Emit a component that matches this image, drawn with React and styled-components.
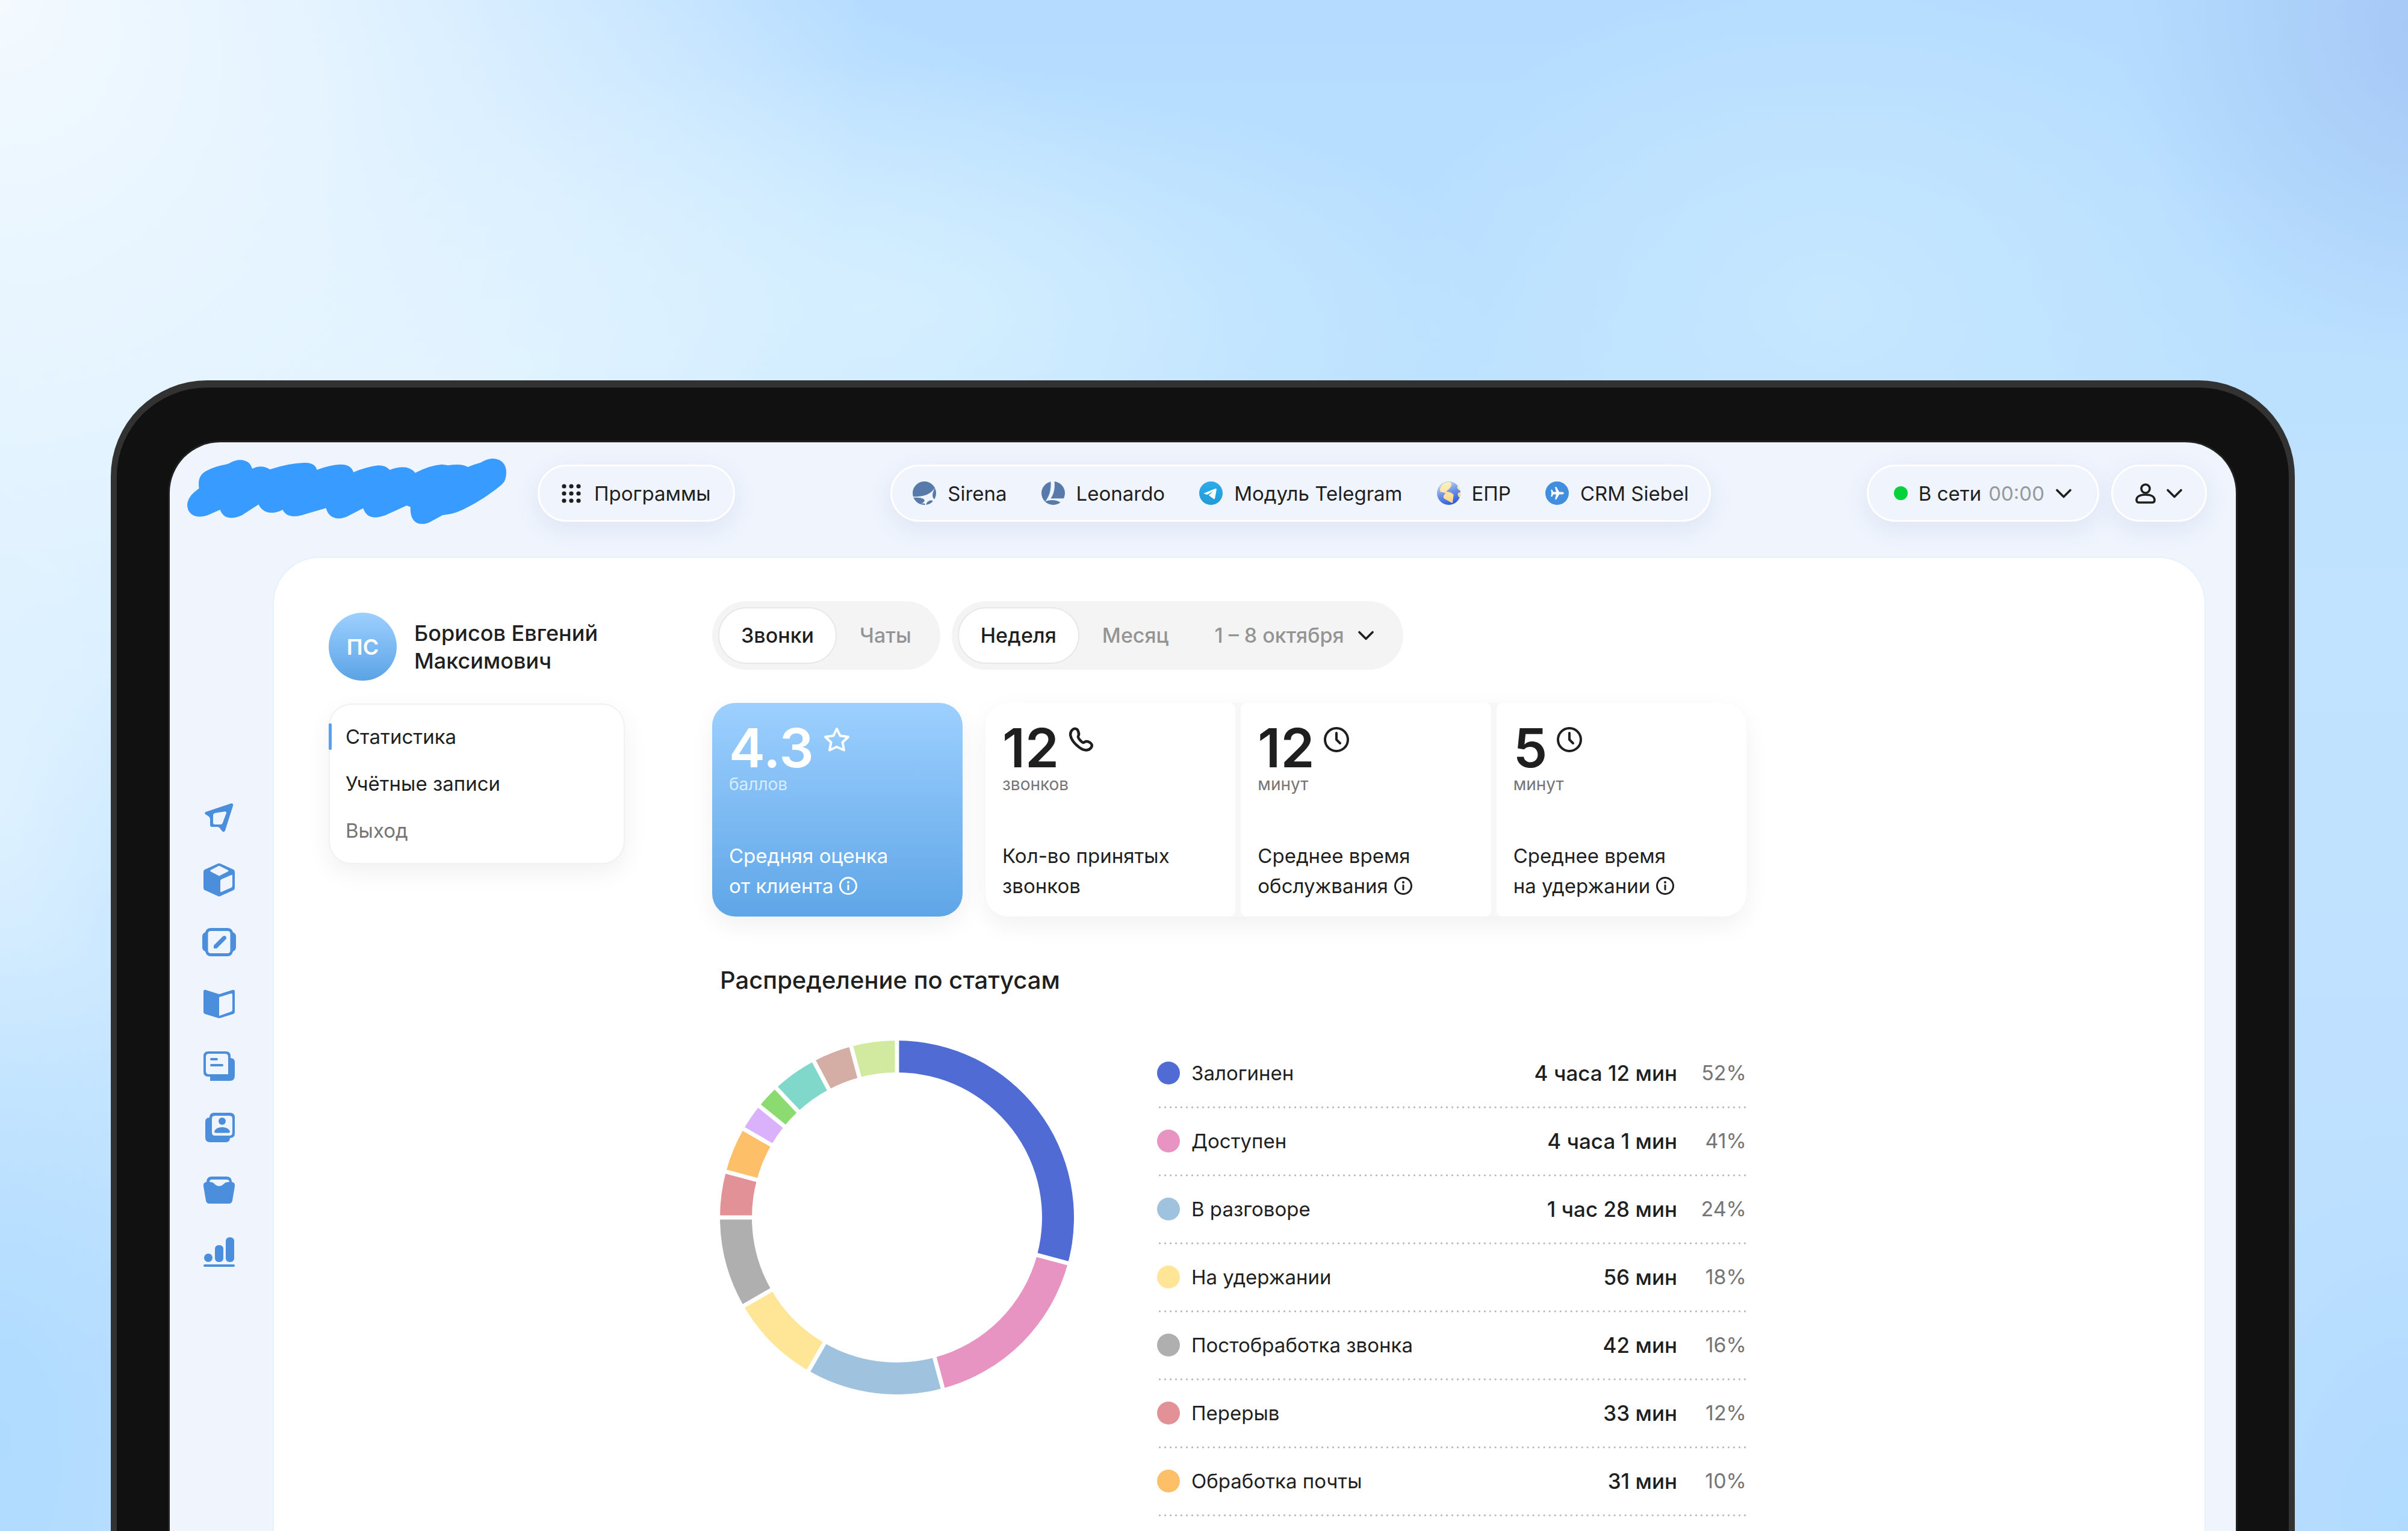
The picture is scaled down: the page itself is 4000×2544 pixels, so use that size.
import React from "react";
import styled, { createGlobalStyle } from "styled-components";

const GlobalStyle = createGlobalStyle`
  * {
    box-sizing: border-box;
  }

  body {
    margin: 0;
    background: #bfe2ff;
    color: #1f1f1f;
    font-family: Inter, "Liberation Sans", sans-serif;
    font-size: 33px;
    line-height: 50px;
  }

  button {
    font: inherit;
    color: inherit;
    background: none;
    border: 0;
    padding: 0;
    cursor: pointer;
  }

  a {
    color: inherit;
    text-decoration: none;
  }
`;

const Page = styled.div`
  display: flex;
  height: 100vh;
  overflow: hidden;
  padding: 632px 188px 0 184px;
  background:
    radial-gradient(ellipse 36% 60% at 0% 0%, #f4faff 0%, rgba(236, 247, 255, 0.8) 40%, rgba(224, 242, 255, 0) 100%),
    radial-gradient(ellipse 13% 22% at 101% 2%, #a5c8f5 0%, rgba(174, 212, 251, 0) 100%),
    radial-gradient(ellipse 34% 30% at 18% 26%, #dcf1ff 0%, rgba(220, 241, 255, 0) 100%),
    radial-gradient(ellipse 18% 22% at 76% 20%, #c6e7ff 0%, rgba(198, 231, 255, 0) 100%),
    radial-gradient(ellipse 26% 16% at 36% 20%, #d0edff 0%, rgba(208, 237, 255, 0) 100%),
    radial-gradient(ellipse 10% 34% at 0% 94%, #afdbff 0%, rgba(175, 219, 255, 0) 100%),
    radial-gradient(ellipse 10% 26% at 100% 100%, #b0daff 0%, rgba(176, 218, 255, 0) 100%),
    radial-gradient(ellipse 10% 40% at 0% 52%, #dbf0ff 0%, rgba(219, 240, 255, 0) 100%),
    linear-gradient(180deg, #b5dcff 0%, #bae0ff 20%, #c1e3ff 40%, #bcdfff 100%);
`;

const Laptop = styled.div`
  flex: 1;
  display: flex;
  min-width: 0;
  padding: 91px 88px 0;
  background: #111111;
  border: 10px solid #323232;
  border-top-width: 12px;
  border-bottom: 0;
  border-radius: 160px 160px 0 0;
`;

const Screen = styled.div`
  flex: 1;
  display: flex;
  flex-direction: column;
  min-width: 0;
  background: #eff4fd;
  border-radius: 84px 84px 0 0;
  box-shadow: 0 0 0 3px #1f2020;
`;

const Header = styled.header`
  display: flex;
  justify-content: space-between;
  align-items: center;
  padding: 27px 48px 0 29px;
`;

const HeaderGroup = styled.div`
  display: flex;
  align-items: center;
  gap: ${({ $gap }) => $gap}px;
`;

const Pill = styled.div`
  display: flex;
  align-items: center;
  gap: ${({ $gap }) => $gap}px;
  height: 95px;
  padding: 0 ${({ $pad }) => $pad}px;
  background: #eff4fd;
  border: 3px solid #ffffff;
  border-radius: 48px;
  box-shadow: 0 12px 40px rgba(78, 104, 170, 0.1);
  white-space: nowrap;
`;

const PillButton = styled(Pill).attrs({ as: "button", type: "button" })`
  background: #eff4fd;
  border: 3px solid #ffffff;
  padding: 0 ${({ $pad }) => $pad}px;
`;

const ProgramLink = styled.a`
  display: flex;
  align-items: center;
  gap: 19px;
`;

const OnlineDot = styled.span`
  width: 23px;
  height: 23px;
  border-radius: 50%;
  background: #04d23c;
`;

const Timer = styled.span`
  color: #96999e;
  margin-left: 12px;
`;

const Body = styled.div`
  flex: 1;
  display: flex;
  margin-top: 48px;
  padding-right: 50px;
`;

const Sidebar = styled.nav`
  flex: none;
  display: flex;
  flex-direction: column;
  align-items: center;
  gap: 47px;
  width: 171px;
  padding: 406px 7px 0 0;
  color: #4b8edb;
`;

const SidebarLink = styled.a`
  display: flex;
`;

const Panel = styled.div`
  flex: 1;
  display: flex;
  align-items: flex-start;
  gap: 145px;
  min-width: 0;
  padding: 72px 91px 0;
  background: #ffffff;
  border: 2px solid #e6f1fe;
  border-bottom: 0;
  border-radius: 78px 78px 0 0;
`;

const Aside = styled.aside`
  flex: none;
  width: 492px;
  padding-top: 19px;
`;

const Profile = styled.div`
  display: flex;
  align-items: center;
  gap: 29px;
`;

const Avatar = styled.div`
  flex: none;
  display: flex;
  align-items: center;
  justify-content: center;
  width: 113px;
  height: 113px;
  border-radius: 50%;
  background: linear-gradient(#9dd0ff, #5ba3e6);
  color: #ffffff;
  font-size: 36px;
  font-weight: 600;
`;

const ProfileName = styled.div`
  font-size: 36px;
  font-weight: 500;
  line-height: 46px;
  white-space: nowrap;
`;

const Menu = styled.nav`
  display: flex;
  flex-direction: column;
  margin-top: 38px;
  padding: 14px 0 15px;
  background: #ffffff;
  border: 2px solid #f1f1f1;
  border-radius: 38px;
  box-shadow: 0 14px 40px rgba(0, 0, 0, 0.06);
`;

const MenuLink = styled.a`
  position: relative;
  padding: 14px 26px;
  color: ${({ $muted }) => ($muted ? "#757575" : "#1f1f1f")};

  &[aria-current]::before {
    content: "";
    position: absolute;
    left: -2px;
    top: 17px;
    width: 5px;
    height: 44px;
    border-radius: 2px;
    background: #5a9fee;
  }
`;

const Main = styled.main`
  flex: 1;
  min-width: 0;
  max-width: 1718px;
`;

const Tabs = styled.div`
  display: flex;
  gap: 19px;
`;

const TabGroup = styled.div`
  display: flex;
  padding: 10px;
  background: #f4f4f4;
  border-radius: 57px;
`;

const Tab = styled.button`
  display: flex;
  align-items: center;
  gap: 22px;
  height: 94px;
  padding: 0 36px;
  border: 2px solid transparent;
  border-radius: 47px;
  font-size: 34px;
  font-weight: 500;
  color: #949494;

  &[aria-pressed="true"] {
    color: #1f1f1f;
    background: #ffffff;
    border-color: #e8e8e8;
  }

  svg {
    color: #1f1f1f;
  }
`;

const Cards = styled.div`
  display: grid;
  grid-template-columns: minmax(0, 416fr) minmax(0, 1264fr);
  gap: 38px;
  margin-top: 55px;
`;

const CardGroup = styled.div`
  display: grid;
  grid-template-columns: repeat(3, minmax(0, 1fr));
  gap: 9px;
  background: #f7f7f7;
  border-radius: 38px;
  box-shadow: 0 14px 40px rgba(0, 0, 0, 0.06);
`;

const Card = styled.section`
  display: flex;
  flex-direction: column;
  min-height: 355px;
  padding: 31px 28px 26px;
  background: #ffffff;
  border-radius: 10px;

  &:first-child {
    border-top-left-radius: 38px;
    border-bottom-left-radius: 38px;
  }

  &:last-child {
    border-top-right-radius: 38px;
    border-bottom-right-radius: 38px;
  }
`;

const RatingCard = styled(Card)`
  color: #ffffff;
  background: linear-gradient(#9dd0ff, #5fa6e7);
  box-shadow: 0 14px 40px rgba(0, 0, 0, 0.06);

  &:first-child {
    border-radius: 38px;
  }
`;

const CardTop = styled.div`
  display: flex;
  align-items: flex-start;
  gap: 16px;

  svg {
    margin-top: 9px;
  }
`;

const CardNumber = styled.div`
  font-size: 90px;
  font-weight: 600;
  line-height: 88px;
`;

const CardUnit = styled.div`
  font-size: 28px;
  line-height: 32px;
  color: ${({ $light }) => ($light ? "#d8ecff" : "#757575")};
`;

const CardLabel = styled.div`
  margin-top: auto;
`;

const LabelLine = styled.div`
  display: flex;
  align-items: center;
  gap: 10px;
  white-space: nowrap;
`;

const Heading = styled.h2`
  margin: 82px 13px 0;
  font-size: 40px;
  font-weight: 500;
  line-height: 48px;
`;

const ChartRow = styled.div`
  display: flex;
  align-items: flex-start;
  gap: 138px;
  margin-top: 76px;
  padding-left: 13px;
`;

const Donut = styled.svg`
  flex: none;
  width: 588px;
  height: 588px;
`;

const StatusTable = styled.table`
  flex: 1;
  border-collapse: collapse;
`;

const StatusRow = styled.tr`
  height: 113px;
  background: radial-gradient(circle, #b4b4b4 1px, transparent 2px) left bottom / 9px 4px repeat-x;
`;

const StatusName = styled.th`
  padding: 0 0 6px;
  font-weight: 400;
  text-align: left;
`;

const StatusLabel = styled.span`
  display: flex;
  align-items: center;
  gap: 19px;
`;

const StatusDot = styled.span`
  width: 38px;
  height: 38px;
  border-radius: 50%;
  background: ${({ $color }) => $color};
`;

const StatusTime = styled.td`
  padding: 0 0 6px;
  font-size: 35px;
  font-weight: 500;
  text-align: right;
`;

const StatusPercent = styled.td`
  width: 115px;
  padding: 0 0 6px;
  font-size: 34px;
  text-align: right;
  color: #757575;
`;

const Logo = () => (
  <svg width="530" height="115" viewBox="215 457 756 344" preserveAspectRatio="none" aria-hidden="true">
    <path
      fill="#389bff"
      d="M243 605C240 560 245 530 266 512C285 492 303 490 315 480C332 458 350 458 362 480Q367 492 369 507Q392 485 411 511Q455 480 492 478C510 478 520 490 522 513Q550 490 577 486C597 486 605 500 609 525Q640 498 668 491Q685 491 695 513Q738 480 755 528Q790 490 818 486Q828 488 833 491Q865 480 880 499Q895 485 910 477C925 460 932 457 940 457C960 460 971 485 971 525C970 560 968 575 955 595C925 645 905 670 880 698C860 722 840 735 820 738L792 770C770 795 742 785 744 698L735 690L685 738C660 758 640 755 632 704L600 738C575 768 550 757 544 703L487 738C465 750 450 745 441 711C420 735 395 733 384 685L345 738C320 762 300 755 293 711L262 740C235 757 215 735 215 685C217 650 228 628 243 605Z"
    />
  </svg>
);

const GridIcon = () => (
  <svg width="32" height="32" viewBox="0 0 32 32" fill="currentColor" aria-hidden="true">
    {[4, 16, 28].map((y) => [4, 16, 28].map((x) => <circle key={`${x}-${y}`} cx={x} cy={y} r="3.6" />))}
  </svg>
);

const ChevronIcon = () => (
  <svg width="28" height="16" viewBox="0 0 28 16" fill="none" stroke="currentColor" aria-hidden="true">
    <path d="M3 2.500l11 11L25 2.500" strokeWidth="3.6" strokeLinecap="round" strokeLinejoin="round" />
  </svg>
);

const UserIcon = () => (
  <svg width="34" height="34" viewBox="0 0 34 34" fill="none" stroke="currentColor" strokeWidth="3.6" aria-hidden="true">
    <circle cx="17" cy="9" r="7" />
    <path d="M2 28c0-6 6-9 15-9s15 3 15 9c0 2.500-1.500 4-4 4H6c-2.500 0-4-1.500-4-4z" />
  </svg>
);

const SirenaIcon = () => (
  <svg width="39" height="39" viewBox="0 0 38 38" aria-hidden="true">
    <circle cx="19" cy="19" r="19" fill="#577aab" />
    <path fill="#eff4fd" d="M0 24.500C15 25 28 23 36.500 9.500C31 20 30 27 38 31L36 34C31 29 23 32 22 38L20 38C21 35 17 35 12 37C18 34 22 31 17 28C12 26 6 26 0 26z" />
    <path fill="#577aab" d="M22 37.500C23 32 28 30 32 31C33 33 28 37 22 37.500z" />
  </svg>
);

const LeonardoIcon = () => (
  <svg width="39" height="39" viewBox="0 0 38 38" aria-hidden="true">
    <circle cx="19" cy="19" r="19" fill="#577aab" />
    <path fill="#eff4fd" d="M15 0C16 13 13 24 6 32.500C14 29 24 29.500 31 34L38 28L36 27.500L15 27.500C21 19 22 9 21 0z" />
  </svg>
);

const TelegramIcon = () => (
  <svg width="39" height="39" viewBox="0 0 38 38" aria-hidden="true">
    <defs>
      <linearGradient id="telegram" x1="0" y1="0" x2="0" y2="1">
        <stop offset="0" stopColor="#2bacee" />
        <stop offset="1" stopColor="#219bd5" />
      </linearGradient>
    </defs>
    <circle cx="19" cy="19" r="19" fill="url(#telegram)" />
    <path fill="#ffffff" d="M8 19L26.500 11.500Q28.500 11 28 13.500L25.500 27Q25 29.500 23 28L15.500 22.500L23 15.500L13 21.500L8.500 20.200Q7 19.600 8 19z" />
  </svg>
);

const GlobeIcon = () => (
  <svg width="39" height="39" viewBox="0 0 38 38" aria-hidden="true">
    <defs>
      <linearGradient id="sea" x1="0.2" y1="0" x2="0.6" y2="1">
        <stop offset="0" stopColor="#d3e2fb" />
        <stop offset="0.5" stopColor="#6f92e6" />
        <stop offset="1" stopColor="#2f59dc" />
      </linearGradient>
      <linearGradient id="land" x1="0" y1="0" x2="0" y2="1">
        <stop offset="0" stopColor="#fff3b8" />
        <stop offset="1" stopColor="#fcd58a" />
      </linearGradient>
      <clipPath id="globe">
        <circle cx="19" cy="19" r="19" />
      </clipPath>
    </defs>
    <g clipPath="url(#globe)">
      <rect width="38" height="38" fill="url(#sea)" />
      <path fill="url(#land)" d="M5 12C6 6 12 1 20 1C24 2 24 6 22 9C20 13 16 14 15 17C19 16 26 19 27 22C26 27 26 31 25 35C20 33 16 30 12 28C9 25 11 22 14 19C10 17 7 18 5 16z" />
      <path fill="url(#land)" d="M33 7C36 9 38 12 38 15C35 14 32 11 33 7zM38 18C35 17 33 19 34 23C35 26 36 26 38 25z" />
    </g>
  </svg>
);

const PlaneIcon = () => (
  <svg width="39" height="39" viewBox="0 0 38 38" aria-hidden="true">
    <circle cx="19" cy="19" r="19" fill="#428ede" />
    <path fill="#ffffff" d="M30 19C30 20.500 28 21 26 21H22.500L18 29H15.500L17.500 21H13L11 24.500H9L10 19L9 13.500H11L13 17H17.500L15.500 9H18L22.500 17H26C28 17 30 17.500 30 19z" />
  </svg>
);

const StarIcon = () => (
  <svg width="44" height="42" viewBox="0 0 44 42" fill="none" stroke="currentColor" aria-hidden="true">
    <path
      d="M22 3L27.500 14.500L41 16.500L31.500 25.500L34 38.500L22 33L10 38.500L12.500 25.500L3 16.500L16.500 14.500Z"
      strokeWidth="4"
      strokeLinejoin="round"
    />
  </svg>
);

const PhoneIcon = () => (
  <svg width="42" height="42" viewBox="0 0 42 42" fill="none" stroke="currentColor" aria-hidden="true">
    <path
      d="M6 5C9 2 14 2 15.500 6C17 10 18 12 16 15.500C15 18 22 26 25 26C28 24 30 23 34 25C38 27 40 30 38 33.500C34 40 26 40 18 34C10 28 4 20 3 13C3 10 4 7 6 5Z"
      strokeWidth="4.500"
      strokeLinejoin="round"
    />
  </svg>
);

const ClockIcon = () => (
  <svg width="42" height="42" viewBox="0 0 42 42" fill="none" stroke="currentColor" aria-hidden="true">
    <circle cx="21" cy="21" r="19" strokeWidth="4" />
    <path d="M21 10v11l6 6" strokeWidth="4" strokeLinecap="round" strokeLinejoin="round" />
  </svg>
);

const InfoIcon = () => (
  <svg width="30" height="30" viewBox="0 0 30 30" fill="none" stroke="currentColor" aria-hidden="true">
    <circle cx="15" cy="15" r="13.500" strokeWidth="3" />
    <path d="M15 14v7" strokeWidth="3" strokeLinecap="round" />
    <circle cx="15" cy="9" r="2" fill="currentColor" stroke="none" />
  </svg>
);

const sidebarItems = [
  {
    label: "Отправить",
    icon: (
      <path
        fillRule="evenodd"
        d="M6 18L48 4Q52 3.500 51 8L38 49Q36 53 33 50L29 45Q28 43 25 43H16Q13 43 13 40V30Q13 27 10 25L5 22Q3 19.500 6 18ZM21 20Q18 21 18 24V36Q18 39 21 39H30Q33 39 34 36L40 20Q40.500 17 37 17.500Z"
      />
    ),
  },
  {
    label: "Объекты",
    icon: (
      <path
        fillRule="evenodd"
        d="M26 1Q28 0 30 1L52 11Q54 12 54 15V41Q54 44 52 45L30 55Q28 56 26 55L4 45Q2 44 2 41V15Q2 12 4 11ZM27 5L13.500 12Q13 13 13.500 14L27 21Q28 22 29 21L43 14Q44 13 43 12L29 5Q28 4.500 27 5ZM32 27Q30 28 30 30V47Q30 49 32 48L48 41Q50 40 50 38V21Q50 19 48 20Z"
      />
    ),
  },
  {
    label: "Заметки",
    icon: (
      <>
        <path
          fillRule="evenodd"
          d="M14 5H42Q49 5 51 12Q56 14 56 19V37Q56 42 51 44Q49 52 42 52H14Q7 52 5 44Q0 42 0 37V19Q0 14 5 12Q7 5 14 5ZM14 10Q9.500 10 9.500 15V42Q9.500 47 14 47H42Q46.500 47 46.500 42V15Q46.500 10 42 10Z"
        />
        <path d="M19 34L34 19Q37 17 39 19Q41 21 39 24L24 39H19Z" />
      </>
    ),
  },
  {
    label: "База знаний",
    icon: (
      <path
        fillRule="evenodd"
        d="M2 8Q2 4 6 5L28 12L50 5Q54 4 54 8V41Q54 44 51 45L30 51.500Q28 52 26 51.500L5 45Q2 44 2 41ZM28 17V48L48 41Q50 40 50 38V13Q50 10 47 11Z"
      />
    ),
  },
  {
    label: "Новости",
    icon: (
      <>
        <path fillRule="evenodd" d="M10 4H39Q47 4 47 12V46H10Q2 46 2 38V12Q2 4 10 4ZM11 8Q6 8 6 13V37Q6 42 11 42H43V13Q43 8 38 8Z" />
        <path d="M46 15Q54 15 54 22V44Q54 53 46 53H13V46H46Z" />
        <path d="M15 17H24M15 27H33" stroke="currentColor" strokeWidth="4" strokeLinecap="round" />
      </>
    ),
  },
  {
    label: "Контакты",
    icon: (
      <>
        <path fillRule="evenodd" d="M20 3H46Q54 3 54 11V37Q54 45 46 45Q46 52 39 52H13Q5 52 5 44V18Q5 11 12 11Q12 3 20 3ZM21 8Q16 8 16 13V36Q16 41 21 41H45Q50 41 50 36V13Q50 8 45 8Z" />
        <circle cx="33" cy="17" r="6" />
        <path d="M20 34Q20 36.500 23 36.500H43Q46 36.500 46 34Q43 27 33 27Q23 27 20 34Z" />
      </>
    ),
  },
  {
    label: "Архив",
    icon: (
      <path
        fillRule="evenodd"
        d="M16 6H40Q49 6 49 15Q55 16 54 22L50 46Q49 51 44 51H12Q7 51 6 46L2 22Q1 16 7 15Q7 6 16 6ZM12 15Q18 15 21 19Q24 22 28 22Q32 22 35 19Q38 15 45 15Q45 11 40 11H16Q12 11 12 15Z"
      />
    ),
  },
  {
    label: "Статистика",
    icon: (
      <>
        <circle cx="10" cy="38" r="7" />
        <rect x="21" y="17" width="14" height="28" rx="6" />
        <rect x="39" y="4" width="14" height="41" rx="6" />
        <rect x="2" y="49" width="52" height="4" rx="2" />
      </>
    ),
  },
];

const programs = [
  { name: "Sirena", Icon: SirenaIcon },
  { name: "Leonardo", Icon: LeonardoIcon },
  { name: "Модуль Telegram", Icon: TelegramIcon },
  { name: "ЕПР", Icon: GlobeIcon },
  { name: "CRM Siebel", Icon: PlaneIcon },
];

const cards = [
  { value: "12", unit: "звонков", label: ["Кол-во принятых", "звонков"], Icon: PhoneIcon },
  { value: "12", unit: "минут", label: ["Среднее время", "обслужвания"], Icon: ClockIcon, info: true },
  { value: "5", unit: "минут", label: ["Среднее время", "на удержании"], Icon: ClockIcon, info: true },
];

const statuses = [
  { name: "Залогинен", time: "4 часа 12 мин", percent: "52%", color: "#516bd4" },
  { name: "Доступен", time: "4 часа 1 мин", percent: "41%", color: "#e894c2" },
  { name: "В разговоре", time: "1 час 28 мин", percent: "24%", color: "#9fc3de" },
  { name: "На удержании", time: "56 мин", percent: "18%", color: "#ffe696" },
  { name: "Постобработка звонка", time: "42 мин", percent: "16%", color: "#afafaf" },
  { name: "Перерыв", time: "33 мин", percent: "12%", color: "#e29296" },
  { name: "Обработка почты", time: "31 мин", percent: "10%", color: "#fdc068" },
];

// each segment ends at this angle, clockwise from the top
const segments = [
  { end: 105, color: "#516bd4" },
  { end: 165, color: "#e894c2" },
  { end: 210, color: "#9fc3de" },
  { end: 240, color: "#ffe696" },
  { end: 270, color: "#afafaf" },
  { end: 285, color: "#e29296" },
  { end: 300, color: "#fdc068" },
  { end: 309, color: "#d9b2fb" },
  { end: 317, color: "#8cdb70" },
  { end: 332, color: "#80d8ca" },
  { end: 345, color: "#d4ada4" },
  { end: 360, color: "#d1ea9f" },
];

const pointAt = (angle, radius) => {
  const rad = ((angle - 90) * Math.PI) / 180;
  return `${294 + radius * Math.cos(rad)} ${294 + radius * Math.sin(rad)}`;
};

const segmentPath = (start, end) =>
  `M${pointAt(start, 294)}A294 294 0 0 1 ${pointAt(end, 294)}L${pointAt(end, 241)}A241 241 0 0 0 ${pointAt(start, 241)}Z`;

const StatusChart = () => (
  <Donut viewBox="0 0 588 588" role="img" aria-label="Распределение по статусам">
    {segments.map(({ end, color }, i) => (
      <path key={end} d={segmentPath(i === 0 ? 0 : segments[i - 1].end, end)} fill={color} />
    ))}
    {segments.map(({ end }) => (
      <path key={end} d={`M${pointAt(end, 238)}L${pointAt(end, 297)}`} stroke="#ffffff" strokeWidth="7" />
    ))}
  </Donut>
);

const StatCard = ({ as: Wrapper = Card, value, unit, label, Icon, info, light }) => (
  <Wrapper>
    <CardTop>
      <CardNumber>{value}</CardNumber>
      <Icon />
    </CardTop>
    <CardUnit $light={light}>{unit}</CardUnit>
    <CardLabel>
      <LabelLine>{label[0]}</LabelLine>
      <LabelLine>
        {label[1]}
        {info && <InfoIcon />}
      </LabelLine>
    </CardLabel>
  </Wrapper>
);

const App = () => {
  return (
    <Page>
      <GlobalStyle />
      <Laptop>
        <Screen>
          <Header>
            <HeaderGroup $gap={52}>
              <Logo />
              <PillButton $gap={22} $pad={37}>
                <GridIcon />
                Программы
              </PillButton>
            </HeaderGroup>
            <Pill as="nav" $gap={57} $pad={34}>
              {programs.map(({ name, Icon }) => (
                <ProgramLink href="#" key={name}>
                  <Icon />
                  {name}
                </ProgramLink>
              ))}
            </Pill>
            <HeaderGroup $gap={20}>
              <PillButton $gap={18} $pad={42}>
                <OnlineDot />
                <span>
                  В сети
                  <Timer>00:00</Timer>
                </span>
                <ChevronIcon />
              </PillButton>
              <PillButton $gap={17} $pad={37} aria-label="Профиль">
                <UserIcon />
                <ChevronIcon />
              </PillButton>
            </HeaderGroup>
          </Header>

          <Body>
            <Sidebar>
              {sidebarItems.map(({ label, icon }) => (
                <SidebarLink href="#" key={label} aria-label={label}>
                  <svg width="56" height="56" viewBox="0 0 56 56" fill="currentColor">
                    {icon}
                  </svg>
                </SidebarLink>
              ))}
            </Sidebar>

            <Panel>
              <Aside>
                <Profile>
                  <Avatar>ПС</Avatar>
                  <ProfileName>
                    Борисов Евгений
                    <br />
                    Максимович
                  </ProfileName>
                </Profile>
                <Menu>
                  <MenuLink href="#" aria-current="page">
                    Статистика
                  </MenuLink>
                  <MenuLink href="#">Учётные записи</MenuLink>
                  <MenuLink href="#" $muted>
                    Выход
                  </MenuLink>
                </Menu>
              </Aside>

              <Main>
                <Tabs>
                  <TabGroup>
                    <Tab type="button" aria-pressed="true">
                      Звонки
                    </Tab>
                    <Tab type="button" aria-pressed="false">
                      Чаты
                    </Tab>
                  </TabGroup>
                  <TabGroup>
                    <Tab type="button" aria-pressed="true">
                      Неделя
                    </Tab>
                    <Tab type="button" aria-pressed="false">
                      Месяц
                    </Tab>
                    <Tab type="button" aria-haspopup="true">
                      1 – 8 октября
                      <ChevronIcon />
                    </Tab>
                  </TabGroup>
                </Tabs>

                <Cards>
                  <StatCard
                    as={RatingCard}
                    value="4.3"
                    unit="баллов"
                    label={["Средняя оценка", "от клиента"]}
                    Icon={StarIcon}
                    info
                    light
                  />
                  <CardGroup>
                    {cards.map((card, i) => (
                      <StatCard key={i} {...card} />
                    ))}
                  </CardGroup>
                </Cards>

                <Heading>Распределение по статусам</Heading>
                <ChartRow>
                  <StatusChart />
                  <StatusTable>
                    <tbody>
                      {statuses.map(({ name, time, percent, color }) => (
                        <StatusRow key={name}>
                          <StatusName scope="row">
                            <StatusLabel>
                              <StatusDot $color={color} />
                              {name}
                            </StatusLabel>
                          </StatusName>
                          <StatusTime>{time}</StatusTime>
                          <StatusPercent>{percent}</StatusPercent>
                        </StatusRow>
                      ))}
                    </tbody>
                  </StatusTable>
                </ChartRow>
              </Main>
            </Panel>
          </Body>
        </Screen>
      </Laptop>
    </Page>
  );
};

export default App;
